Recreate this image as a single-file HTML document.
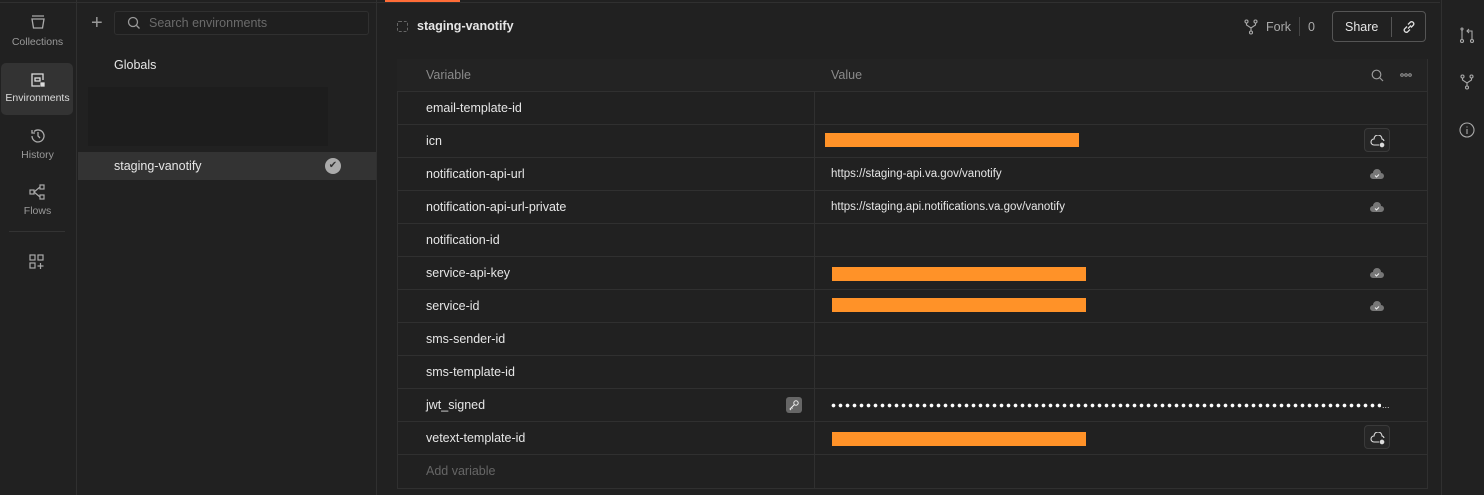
<!DOCTYPE html><html><head><style>
*{box-sizing:border-box;margin:0;padding:0}
body{width:1484px;height:495px;background:#212121;font-family:"Liberation Sans",sans-serif;color:#e6e6e6;position:relative;overflow:hidden;font-size:12.5px}
.abs{position:absolute}
.nav{left:0;top:0;width:77px;height:495px;border-right:1px solid #303030}
.ni{position:absolute;left:2px;width:71px;text-align:center;color:#9a9a9a;font-size:10.5px}
.ni svg{display:block;margin:0 auto 4px}
.row{position:absolute;left:397px;width:1030px;height:33px;border-bottom:1px solid #303030}
.row .k{position:absolute;left:29px;top:9px}
.row .v{position:absolute;left:434px;top:10px;font-size:11.5px}
.bar{position:absolute;height:14px;background:#ff9228}
.btn{position:absolute;left:967px;top:3px;width:26px;height:24px;border:1px solid #3a3a3a;border-radius:4px;background:#262626}
.c1{position:absolute;left:972px;top:11px}
.c2{position:absolute;left:973px;top:10px}
</style></head><body>
<div class="abs" style="left:0;top:2px;width:1440px;height:1px;background:#303030"></div>
<div class="abs" style="left:385px;top:0;width:75px;height:2px;background:#ff6c37"></div>
<div class="abs nav"></div>
<div class="ni" style="top:14px"><svg width="16" height="18" viewBox="0 0 16 18" fill="none" stroke="#aaa" stroke-width="1.3"><path d="M2 2h12M2 5h12l-1.5 9h-9z"/></svg>Collections</div>
<div class="abs" style="left:1px;top:63px;width:72px;height:52px;background:#333;border-radius:5px"></div>
<div class="ni" style="top:72px;color:#ddd"><svg width="16" height="16" viewBox="0 0 16 16" fill="none" stroke="#ddd" stroke-width="1.3"><path d="M13 8V2H2v12h8"/><rect x="5" y="6" width="5" height="3"/><rect x="11" y="11" width="3" height="3" fill="#ddd"/></svg>Environments</div>
<div class="ni" style="top:127px"><svg width="18" height="18" viewBox="0 0 18 18" fill="none" stroke="#aaa" stroke-width="1.3"><path d="M3 9a6 6 0 1 0 2-4.5M3 3v3h3M9 5v4l2 2"/></svg>History</div>
<div class="ni" style="top:183px"><svg width="18" height="18" viewBox="0 0 18 18" fill="none" stroke="#aaa" stroke-width="1.2"><rect x="1" y="7" width="4" height="4"/><rect x="11" y="2" width="4" height="4"/><rect x="11" y="12" width="4" height="4"/><path d="M5 9l6-5M5 9l6 5"/></svg>Flows</div>
<div class="abs" style="left:9px;top:231px;width:56px;height:1px;background:#333"></div>
<svg class="abs" style="left:29px;top:254px" width="16" height="16" viewBox="0 0 16 16" fill="none" stroke="#aaa" stroke-width="1.2"><rect x="1" y="1" width="5" height="5"/><rect x="9" y="1" width="5" height="5"/><rect x="1" y="9" width="5" height="5"/><path d="M11.5 9v6M8.5 12h6"/></svg>
<div class="abs" style="left:376px;top:0;width:1px;height:495px;background:#303030"></div>
<div class="abs" style="left:91px;top:13px;color:#999;font-size:20px;line-height:20px">+</div>
<div class="abs" style="left:114px;top:11px;width:255px;height:24px;border:1px solid #303030;border-radius:3px;background:#1f1f1f"></div>
<svg class="abs" style="left:127px;top:16px" width="14" height="14" viewBox="0 0 14 14" fill="none" stroke="#999" stroke-width="1.3"><circle cx="6" cy="6" r="4.5"/><path d="M9.5 9.5l3 3"/></svg>
<div class="abs" style="left:149px;top:16px;color:#6b6b6b;font-size:12.5px">Search environments</div>
<div class="abs" style="left:114px;top:58px">Globals</div>
<div class="abs" style="left:88px;top:87px;width:240px;height:59px;background:#1d1d1d"></div>
<div class="abs" style="left:78px;top:152px;width:298px;height:28px;background:#333"></div>
<div class="abs" style="left:114px;top:159px">staging-vanotify</div>
<div class="abs" style="left:325px;top:158px;width:16px;height:16px;border-radius:50%;background:#aaa;color:#333;font-size:10px;text-align:center;line-height:16px">✔</div>
<div class="abs" style="left:397px;top:21px;width:11px;height:11px;border:1px dashed #666;border-radius:2px"></div>
<div class="abs" style="left:417px;top:19px;font-weight:bold;font-size:12.5px">staging-vanotify</div>
<svg class="abs" style="left:1244px;top:19px" width="14" height="16" viewBox="0 0 14 16" fill="none" stroke="#aaa" stroke-width="1.1"><circle cx="2.5" cy="2.5" r="1.5"/><circle cx="11.5" cy="2.5" r="1.5"/><circle cx="7" cy="13.5" r="1.5"/><path d="M2.5 4v2l4.5 3 4.5-3V4M7 9v3"/></svg>
<div class="abs" style="left:1266px;top:20px;color:#aaa">Fork</div>
<div class="abs" style="left:1299px;top:17px;width:1px;height:19px;background:#444"></div>
<div class="abs" style="left:1308px;top:20px;color:#aaa">0</div>
<div class="abs" style="left:1332px;top:11px;width:94px;height:31px;border:1px solid #555;border-radius:4px"></div>
<div class="abs" style="left:1345px;top:20px">Share</div>
<div class="abs" style="left:1391px;top:17px;width:1px;height:20px;background:#555"></div>
<svg class="abs" style="left:1401px;top:19px" width="16" height="16" viewBox="0 0 16 16" fill="none" stroke="#ddd" stroke-width="1.3"><path d="M7 9.5l3-3M6 7.5L3.5 10a2.2 2.2 0 0 0 3 3L9 10.5M10 8.5l2.5-2.5a2.2 2.2 0 0 0-3-3L7 5.5"/></svg>
<div class="abs" style="left:1441px;top:0;width:1px;height:495px;background:#303030"></div>
<svg class="abs" style="left:1459px;top:26px" width="16" height="18" viewBox="0 0 16 18" fill="none" stroke="#aaa" stroke-width="1.1"><circle cx="3" cy="15" r="1.5"/><circle cx="13" cy="15" r="1.5"/><circle cx="3" cy="3" r="1"/><path d="M3 4v9M13 13V5H8M10 3L8 5l2 2"/></svg>
<svg class="abs" style="left:1460px;top:74px" width="14" height="16" viewBox="0 0 14 16" fill="none" stroke="#aaa" stroke-width="1.1"><circle cx="2.5" cy="2.5" r="1.5"/><circle cx="11.5" cy="2.5" r="1.5"/><circle cx="7" cy="13.5" r="1.5"/><path d="M2.5 4v2l4.5 3 4.5-3V4M7 9v3"/></svg>
<svg class="abs" style="left:1459px;top:122px" width="16" height="16" viewBox="0 0 16 16" fill="none" stroke="#aaa" stroke-width="1.1"><circle cx="8" cy="8" r="7"/><path d="M8 7v5M8 4.5v1"/></svg>
<div class="abs" style="left:397px;top:59px;width:1031px;height:430px;border:1px solid #303030"></div>
<div class="abs" style="left:814px;top:59px;width:1px;height:430px;background:#303030"></div>
<div class="abs" style="left:1357px;top:59px;width:1px;height:33px;background:#303030"></div>
<div class="row" style="top:59px;background:#232323"><span class="k" style="color:#8a8a8a">Variable</span><span class="k" style="left:434px;color:#8a8a8a">Value</span>
<svg class="abs" style="left:974px;top:10px" width="13" height="13" viewBox="0 0 13 13" fill="none" stroke="#999" stroke-width="1.2"><circle cx="5.5" cy="5.5" r="4.3"/><path d="M8.5 8.5l3.5 3.5"/></svg>
<svg class="abs" style="left:1003px;top:13px" width="12" height="6" viewBox="0 0 12 6" fill="none" stroke="#999" stroke-width="1"><circle cx="2" cy="3" r="1.3"/><circle cx="6" cy="3" r="1.3"/><circle cx="10" cy="3" r="1.3"/></svg></div>
<div class="row" style="top:92px"><span class="k">email-template-id</span></div>
<div class="row" style="top:125px"><span class="k">icn</span><div class="bar" style="left:428px;top:8px;width:254px"></div><div class="btn"></div><svg class="c2" width="16" height="13" viewBox="0 0 16 13" fill="none" stroke="#ddd" stroke-width="1.1"><path d="M9 10H4a3 3 0 0 1 0-6 4 4 0 0 1 8 0 2.5 2.5 0 0 1 2 2"/><circle cx="12" cy="10" r="1.8" fill="#ddd"/></svg></div>
<div class="row" style="top:158px"><span class="k">notification-api-url</span><span class="v">https://staging-api.va.gov/vanotify</span><svg class="c1" width="16" height="11" viewBox="0 0 16 11"><path d="M4 10a3 3 0 0 1 0-6 4 4 0 0 1 8 0 3 3 0 0 1 0 6z" fill="#777"/><path d="M6 6.5l1.5 1.5 2.5-2.5" stroke="#eee" fill="none" stroke-width="1"/></svg></div>
<div class="row" style="top:191px"><span class="k">notification-api-url-private</span><span class="v">https://staging.api.notifications.va.gov/vanotify</span><svg class="c1" width="16" height="11" viewBox="0 0 16 11"><path d="M4 10a3 3 0 0 1 0-6 4 4 0 0 1 8 0 3 3 0 0 1 0 6z" fill="#777"/><path d="M6 6.5l1.5 1.5 2.5-2.5" stroke="#eee" fill="none" stroke-width="1"/></svg></div>
<div class="row" style="top:224px"><span class="k">notification-id</span></div>
<div class="row" style="top:257px"><span class="k">service-api-key</span><div class="bar" style="left:435px;top:10px;width:254px"></div><svg class="c1" width="16" height="11" viewBox="0 0 16 11"><path d="M4 10a3 3 0 0 1 0-6 4 4 0 0 1 8 0 3 3 0 0 1 0 6z" fill="#777"/><path d="M6 6.5l1.5 1.5 2.5-2.5" stroke="#eee" fill="none" stroke-width="1"/></svg></div>
<div class="row" style="top:290px"><span class="k">service-id</span><div class="bar" style="left:435px;top:8px;width:254px"></div><svg class="c1" width="16" height="11" viewBox="0 0 16 11"><path d="M4 10a3 3 0 0 1 0-6 4 4 0 0 1 8 0 3 3 0 0 1 0 6z" fill="#777"/><path d="M6 6.5l1.5 1.5 2.5-2.5" stroke="#eee" fill="none" stroke-width="1"/></svg></div>
<div class="row" style="top:323px"><span class="k">sms-sender-id</span></div>
<div class="row" style="top:356px"><span class="k">sms-template-id</span></div>
<div class="row" style="top:389px"><span class="k">jwt_signed</span><div class="abs" style="left:389px;top:8px;width:16px;height:16px;background:#666;border-radius:3px"></div><svg class="abs" style="left:391px;top:10px" width="12" height="12" viewBox="0 0 12 12" fill="none" stroke="#eee" stroke-width="1"><circle cx="8" cy="4" r="2.2"/><path d="M6.5 5.5L2 10l1 1M3.5 8.5l1 1"/></svg>
<div class="abs" style="left:434px;top:14px;width:550px;height:5px;background:radial-gradient(circle at 2.5px 2.5px,#fff 1.6px,transparent 2.1px) 0 0/7px 5px repeat-x"></div><span class="abs" style="left:985px;top:11px;font-size:9px;color:#ddd">...</span></div>
<div class="row" style="top:422px"><span class="k">vetext-template-id</span><div class="bar" style="left:435px;top:10px;width:254px"></div><div class="btn"></div><svg class="c2" width="16" height="13" viewBox="0 0 16 13" fill="none" stroke="#ddd" stroke-width="1.1"><path d="M9 10H4a3 3 0 0 1 0-6 4 4 0 0 1 8 0 2.5 2.5 0 0 1 2 2"/><circle cx="12" cy="10" r="1.8" fill="#ddd"/></svg></div>
<div class="row" style="top:455px;border-bottom:none"><span class="k" style="color:#666">Add variable</span></div>
</body></html>
